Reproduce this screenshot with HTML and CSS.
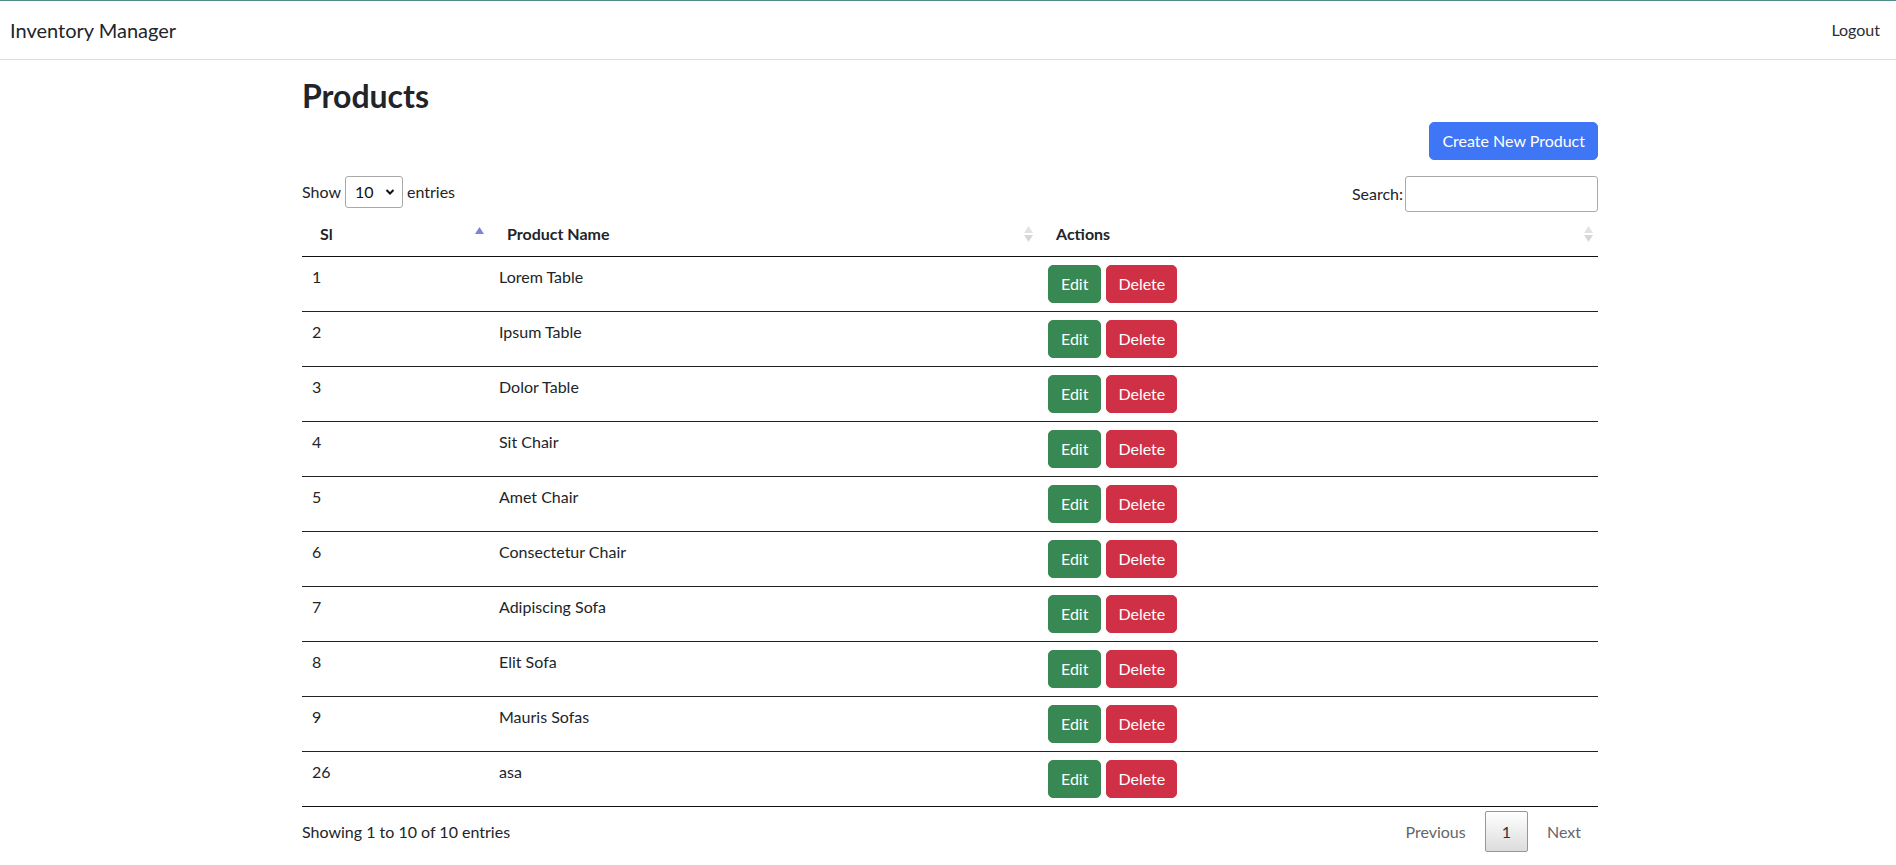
FILE: index.html
```html
<!DOCTYPE html>
<html lang="en">
<head>
<meta charset="utf-8">
<title>Inventory Manager</title>
<link rel="stylesheet" href="styles.css">
</head>
<body>
<nav class="navbar">
  <a class="brand" href="#">Inventory Manager</a>
  <a class="nav-link" href="#">Logout</a>
</nav>
<main class="container">
  <h1 class="page-title">Products</h1>
  <div class="actions-bar">
    <a class="btn btn-primary" href="#">Create New Product</a>
  </div>
  <div class="controls">
    <label class="length">Show
      <span class="select-wrap">
        <select class="select"><option>10</option><option>25</option><option>50</option><option>100</option></select>
        <svg class="chev" width="10" height="8" viewBox="0 0 10 8"><path d="M1.5 2 L5 5.5 L8.5 2" fill="none" stroke="#111" stroke-width="2"/></svg>
      </span>
      entries</label>
    <label class="filter">Search:<input class="search" type="search"></label>
  </div>
  <table class="data-table">
    <colgroup><col class="c1"><col class="c2"><col class="c3"></colgroup>
    <thead>
      <tr>
        <th>Sl<svg class="sort" width="19" height="19" viewBox="0 0 19 19"><path d="M5 9 L9.5 2 L14 9 Z" fill="#7f80df"/></svg></th>
        <th>Product Name<svg class="sort" width="19" height="19" viewBox="0 0 19 19"><path d="M5 8 L9.5 1 L14 8 Z" fill="#e2e2e2"/><path d="M5 10 L9.5 17 L14 10 Z" fill="#d6d6d6"/></svg></th>
        <th>Actions<svg class="sort" width="19" height="19" viewBox="0 0 19 19"><path d="M5 8 L9.5 1 L14 8 Z" fill="#e2e2e2"/><path d="M5 10 L9.5 17 L14 10 Z" fill="#d6d6d6"/></svg></th>
      </tr>
    </thead>
    <tbody>
      <tr><td>1</td><td>Lorem Table</td><td><a class="btn btn-success" href="#">Edit</a><a class="btn btn-danger" href="#">Delete</a></td></tr>
      <tr><td>2</td><td>Ipsum Table</td><td><a class="btn btn-success" href="#">Edit</a><a class="btn btn-danger" href="#">Delete</a></td></tr>
      <tr><td>3</td><td>Dolor Table</td><td><a class="btn btn-success" href="#">Edit</a><a class="btn btn-danger" href="#">Delete</a></td></tr>
      <tr><td>4</td><td>Sit Chair</td><td><a class="btn btn-success" href="#">Edit</a><a class="btn btn-danger" href="#">Delete</a></td></tr>
      <tr><td>5</td><td>Amet Chair</td><td><a class="btn btn-success" href="#">Edit</a><a class="btn btn-danger" href="#">Delete</a></td></tr>
      <tr><td>6</td><td>Consectetur Chair</td><td><a class="btn btn-success" href="#">Edit</a><a class="btn btn-danger" href="#">Delete</a></td></tr>
      <tr><td>7</td><td>Adipiscing Sofa</td><td><a class="btn btn-success" href="#">Edit</a><a class="btn btn-danger" href="#">Delete</a></td></tr>
      <tr><td>8</td><td>Elit Sofa</td><td><a class="btn btn-success" href="#">Edit</a><a class="btn btn-danger" href="#">Delete</a></td></tr>
      <tr><td>9</td><td>Mauris Sofas</td><td><a class="btn btn-success" href="#">Edit</a><a class="btn btn-danger" href="#">Delete</a></td></tr>
      <tr><td>26</td><td>asa</td><td><a class="btn btn-success" href="#">Edit</a><a class="btn btn-danger" href="#">Delete</a></td></tr>
    </tbody>
  </table>
  <div class="table-footer">
    <div class="info">Showing 1 to 10 of 10 entries</div>
    <div class="paginate">
      <a class="page-btn disabled" href="#">Previous</a>
      <a class="page-btn current" href="#">1</a>
      <a class="page-btn disabled" href="#">Next</a>
    </div>
  </div>
</main>
</body>
</html>
```
FILE: styles.css
```css
* { box-sizing: border-box; }
html, body { margin: 0; padding: 0; }
body {
  font-family: Lato, "Open Sans", "Noto Sans", sans-serif;
  font-size: 16px;
  line-height: 24px;
  color: #212529;
  background: #fff;
}
a { text-decoration: none; }

.navbar {
  display: flex;
  justify-content: space-between;
  align-items: center;
  height: 60px;
  padding: 0 16px 0 10px;
  border-top: 1px solid #4f8b87;
  border-bottom: 1px solid #dcdfe2;
}
.brand { font-size: 20px; color: #212529; line-height: 30px; }
.nav-link { font-size: 16px; color: #2b2e31; }

.container {
  width: 1296px;
  margin-left: calc(50% - 646px);
}
.page-title {
  margin: 17px 0 7px;
  font-size: 32px;
  line-height: 38px;
  font-weight: 700;
}
.actions-bar {
  display: flex;
  justify-content: flex-end;
}
.btn {
  display: inline-block;
  padding: 6px 12px;
  font-size: 16px;
  line-height: 24px;
  border: 1px solid transparent;
  border-radius: 5px;
  color: #fff;
}
.btn-primary { background: #3f76f6; border-color: #3f76f6; }
.btn-success { background: #378853; border-color: #378853; }
.btn-danger { background: #d03045; border-color: #d03045; margin-left: 5px; padding: 6px 11px; }

.controls {
  display: flex;
  justify-content: space-between;
  align-items: flex-start;
  margin-top: 16px;
  height: 36px;
}
.length {
  display: flex;
  align-items: center;
  height: 32px;
  gap: 4px;
}
.select-wrap { position: relative; display: inline-block; }
.select {
  appearance: none;
  -webkit-appearance: none;
  width: 58px;
  height: 32px;
  padding: 0 0 0 9px;
  font: inherit;
  color: #111;
  border: 1px solid #aaa;
  border-radius: 3px;
  background: #fff;
}
.chev {
  position: absolute;
  right: 8px;
  top: 12px;
  pointer-events: none;
}
.filter {
  display: flex;
  align-items: center;
  gap: 2px;
}
.search {
  width: 193px;
  height: 36px;
  padding: 5px;
  border: 1px solid #aaa;
  border-radius: 3px;
  font: inherit;
}

.data-table {
  width: 1296px;
  table-layout: fixed;
  border-collapse: collapse;
  border-bottom: 1px solid #111;
}
.c1 { width: 187px; }
.c2 { width: 549px; }
.c3 { width: 560px; }
.data-table th {
  position: relative;
  text-align: left;
  font-weight: 700;
  padding: 10px 18px;
  line-height: 24px;
  border-bottom: 1px solid #111;
}
.sort {
  position: absolute;
  right: 0;
  top: 13px;
}
.data-table td {
  padding: 8px 10px;
  vertical-align: top;
  border-top: 1px solid #222;
}
.data-table tbody tr:first-child td { border-top: none; }

.table-footer {
  display: flex;
  justify-content: space-between;
  align-items: flex-start;
}
.info { padding-top: 13px; }
.paginate {
  display: flex;
  gap: 2px;
  padding-top: 4px;
}
.page-btn {
  display: inline-block;
  padding: 8px 16px;
  line-height: 23px;
  border: 1px solid transparent;
  border-radius: 2px;
  color: #666;
}
.page-btn.current {
  color: #333;
  border-color: #979797;
  background: linear-gradient(to bottom, #fff 0%, #dcdcdc 100%);
}
```
